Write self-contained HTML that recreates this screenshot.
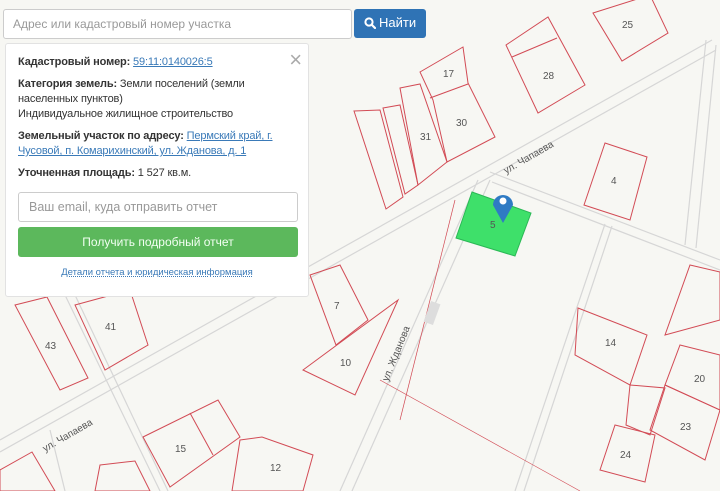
<!DOCTYPE html>
<html><head><meta charset="utf-8"><style>
*{box-sizing:border-box;margin:0;padding:0}
body{width:720px;height:491px;overflow:hidden;background:#f7f7f3;font-family:"Liberation Sans",sans-serif;position:relative}
svg{position:absolute;left:0;top:0}
.search{position:absolute;left:3px;top:9px;width:349px;height:30px;background:#fff;border:1px solid #ccc;border-radius:3px;font-size:12px;color:#999;padding:7px 9px}
.btn{position:absolute;left:354px;top:9px;width:72px;height:29px;background:#2f73b5;border-radius:3px;color:#fff;font-size:13px;padding:6px 0 0 10px;font-weight:normal}
.btn svg{position:static;vertical-align:-2px;margin-right:3px}
.panel{position:absolute;left:5px;top:43px;width:304px;height:254px;background:#fff;border:1px solid #e2e2e2;border-radius:3px;font-size:11px;letter-spacing:-0.15px;color:#333;padding:11px 12px}
.panel p{line-height:15px;margin-bottom:7px}
b{font-weight:bold}
a{color:#3a7ab8;text-decoration:underline}
.x{position:absolute;right:6px;top:3px;font-size:22px;color:#aaa;font-weight:300}
.email{position:absolute;left:12px;top:148px;width:280px;height:30px;border:1px solid #ccc;border-radius:3px;color:#999;font-size:12.5px;padding:7px 10px;letter-spacing:0}
.get{position:absolute;left:12px;top:183px;width:280px;height:30px;background:#5cb85c;border-radius:3px;font-size:12px;text-align:center;padding-top:8px;color:#f2fff2;letter-spacing:0}
.det{position:absolute;left:0;width:100%;top:223px;text-align:center;font-size:9.5px;color:#3a7ab8;text-decoration:underline dotted;letter-spacing:0}
</style></head><body>
<svg width="720" height="491" viewBox="0 0 720 491">
<g stroke="#d6d6d6" stroke-width="1.2" fill="none">
<line x1="0" y1="440" x2="712" y2="40"/><line x1="0" y1="452" x2="716" y2="50"/>
<line x1="478" y1="180" x2="340" y2="491"/><line x1="490" y1="180" x2="352" y2="491"/>
<line x1="490" y1="172" x2="720" y2="260"/><line x1="492" y1="182" x2="720" y2="270"/>
<line x1="706" y1="40" x2="685" y2="245"/><line x1="716" y1="45" x2="696" y2="248"/>
<line x1="605" y1="224" x2="515" y2="491"/><line x1="612" y1="226" x2="524" y2="491"/>
<line x1="65" y1="295" x2="160" y2="491"/><line x1="75" y1="295" x2="168" y2="491"/>
<line x1="50" y1="430" x2="65" y2="491"/>
</g>
<g stroke="#d24b55" stroke-width="1" fill="none">
<polygon points="593,13 650,-5 668,33 622,61"/>
<polygon points="506,45 548,17 585,85 538,113"/><line x1="512" y1="57" x2="557" y2="38"/>
<polygon points="420,72 463,47 468,83 495,137 447,162 433,100"/><line x1="430" y1="98" x2="468" y2="84"/>
<polygon points="400,88 420,84 447,162 418,185"/>
<polygon points="383,108 400,105 418,185 405,194"/>
<polygon points="354,111 380,110 403,197 386,209"/>
<polygon points="605,143 647,157 630,220 584,205"/>
<polygon points="310,275 340,265 368,320 336,345"/>
<polygon points="303,370 398,300 355,395"/>
<polygon points="578,308 647,335 630,385 575,355"/>
<polygon points="690,265 720,272 720,320 665,335"/>
<polygon points="680,345 720,355 720,410 665,385"/>
<polygon points="665,385 720,410 705,460 650,430"/>
<polygon points="630,385 665,388 650,435 626,425"/>
<polygon points="615,425 655,435 645,482 600,470"/>
<polygon points="15,305 47,297 88,378 60,390"/>
<polygon points="75,305 130,290 148,345 105,370"/>
<polygon points="143,437 218,400 240,437 170,487"/><line x1="190" y1="413" x2="213" y2="455"/>
<polygon points="240,440 262,437 313,455 303,491 232,491"/>
<polygon points="0,470 32,452 55,491 0,491"/>
<polygon points="100,465 135,461 150,491 95,491"/>
<line x1="380" y1="380" x2="580" y2="491" stroke-width=".6"/>
<line x1="455" y1="200" x2="400" y2="420" stroke-width=".7"/>
</g>
<g fill="#555" font-size="10" font-family="Liberation Sans,sans-serif">
<text x="622" y="28">25</text><text x="543" y="79">28</text><text x="443" y="77">17</text><text x="456" y="126">30</text><text x="420" y="140">31</text>
<text x="611" y="184">4</text><text x="334" y="309">7</text><text x="340" y="366">10</text><text x="605" y="346">14</text><text x="694" y="382">20</text><text x="680" y="430">23</text><text x="620" y="458">24</text>
<text x="105" y="330">41</text><text x="45" y="349">43</text><text x="175" y="452">15</text><text x="270" y="471">12</text>
<text x="506" y="174" transform="rotate(-30 506 174)">ул. Чапаева</text>
<text x="45" y="452" transform="rotate(-30 45 452)">ул. Чапаева</text>
<text x="388" y="382" transform="rotate(-68 388 382)">ул. Жданова</text>
</g>
<rect x="427" y="302" width="10" height="22" fill="#ddd" transform="rotate(20 432 313)"/>
<polygon points="472,192 531,213 515,256 456,238" fill="#3ee06a" stroke="#2ab855"/>
<text x="490" y="228" font-size="10" fill="#555">5</text>
<path d="M503,223 L493,205 A10,10 0 1 1 513,205 Z" fill="#2f7bc4"/><circle cx="503" cy="201" r="3.5" fill="#fff"/>
</svg>
<div class="search">Адрес или кадастровый номер участка</div>
<div class="btn"><svg width="12" height="12" viewBox="0 0 12 12"><circle cx="5" cy="5" r="3.6" stroke="#fff" stroke-width="2" fill="none"/><line x1="7.6" y1="7.6" x2="11" y2="11" stroke="#fff" stroke-width="2.2" stroke-linecap="round"/></svg>Найти</div>
<div class="panel"><span class="x">×</span>
<p><b>Кадастровый номер:</b> <a>59:11:0140026:5</a></p>
<p><b>Категория земель:</b> Земли поселений (земли<br>населенных пунктов)<br>Индивидуальное жилищное строительство</p>
<p><b>Земельный участок по адресу:</b> <a>Пермский край, г.<br>Чусовой, п. Комарихинский, ул. Жданова, д. 1</a></p>
<p><b>Уточненная площадь:</b> 1 527 кв.м.</p>
<div class="email">Ваш email, куда отправить отчет</div>
<div class="get">Получить подробный отчет</div>
<div class="det">Детали отчета и юридическая информация</div>
</div>
</body></html>
